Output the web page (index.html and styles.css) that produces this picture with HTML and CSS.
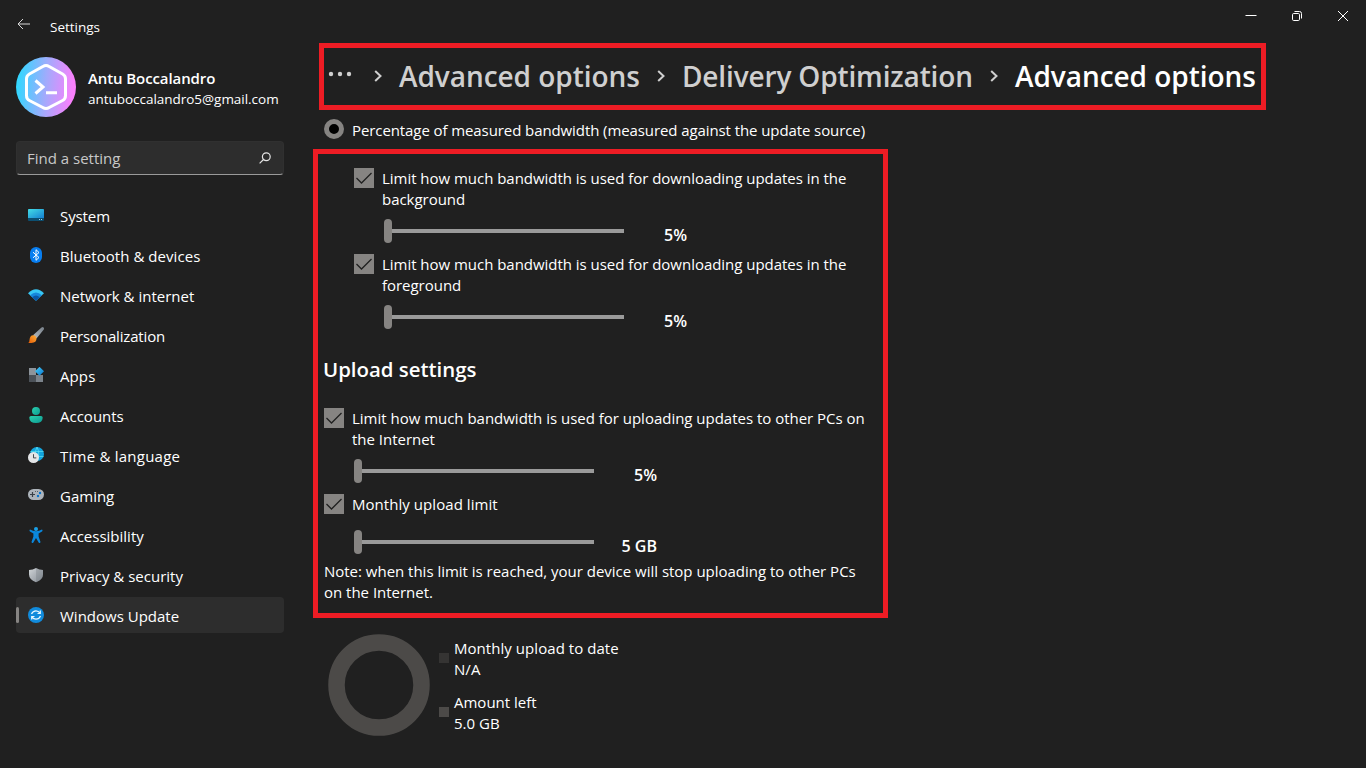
FILE: index.html
```html
<!DOCTYPE html>
<html lang="en">
<head>
<meta charset="utf-8">
<title>Settings</title>
<link rel="stylesheet" href="styles.css">
</head>
<body>
<div class="window">
  <aside class="sidebar">
    <header class="titlebar">
      <svg class="back" width="14" height="12" viewBox="0 0 14 12" fill="none" stroke="#d8d8d8"><path d="M13 6H1.2M6 1 1 6l5 5"/></svg>
      <span class="apptitle">Settings</span>
    </header>
    <div class="profile">
      <svg class="avatar" width="60" height="60" viewBox="0 0 60 60" fill="none">
        <defs><linearGradient id="av" x1="0" y1="0.45" x2="1" y2="0.55"><stop offset="0.02" stop-color="#32d7ff"/><stop offset="0.5" stop-color="#a3aafc"/><stop offset="0.95" stop-color="#fb80fc"/></linearGradient></defs>
        <circle cx="30" cy="30" r="30" fill="url(#av)"/>
        <path d="M26.8 9.6Q30 7.3 33.2 9.6L46.6 17Q49.5 18.6 49.5 22V38.500Q49.500 42 46.600 43.500L33.200 50.500Q30 52.600 26.800 50.500L13.400 43.500Q10.500 42 10.500 38.500V22Q10.500 18.600 13.400 17Z" stroke="#fff" stroke-width="3"/>
        <path d="m19.500 23.500 7.500 6.500-7.500 6.500M30 35.800h11" stroke="#fff" stroke-width="3"/>
      </svg>
      <div class="who"><div class="name">Antu Boccalandro</div><div class="mail">antuboccalandro5@gmail.com</div></div>
    </div>
    <div class="search"><span>Find a setting</span>
      <svg width="12" height="12" viewBox="0 0 12 12" fill="none" stroke="#e4e4e4" stroke-width="1.200"><circle cx="7.300" cy="4.700" r="3.900"/><path d="M4.500 7.500.6 11.400"/></svg>
    </div>
    <nav class="nav">
      <a class="item"><svg width="16" height="16" viewBox="0 0 16 16"><defs><linearGradient id="sy" x1="0" y1="0" x2="1" y2="1"><stop offset="0" stop-color="#43dde6"/><stop offset="1" stop-color="#1581d2"/></linearGradient></defs><rect y="2" width="16" height="12" rx="1" fill="#0c4f71"/><path d="M0 11V3q0-1 1-1h14q1 0 1 1v8z" fill="url(#sy)"/><path d="M11 12h1v1h-1zm2 0h1v1h-1z" fill="#9fd7ee"/></svg><span class="s1">System</span></a>
      <a class="item"><svg width="16" height="16" viewBox="0 0 16 16"><rect x="2" width="12" height="16" rx="6" fill="#087ef0"/><path d="m5 5.200 6 5.300-3 2.800V2.700l3 2.800-6 5.300" fill="none" stroke="#fff"/></svg><span class="s2">Bluetooth &amp; devices</span></a>
      <a class="item"><svg width="16" height="16" viewBox="0 0 16 16"><path d="M0 6.200Q8-1.500 16 6.200L8 13.800z" fill="#37c7f5"/><path d="M2.200 8.200Q8 2.800 13.800 8.200L8 13.800z" fill="#1687dc"/><path d="M4.300 10.200Q8 6.800 11.700 10.200L8 13.800z" fill="#0957a8"/></svg><span class="s3">Network &amp; internet</span></a>
      <a class="item"><svg width="16" height="16" viewBox="0 0 16 16"><defs><linearGradient id="br" x1="1" y1="0" x2="0" y2="1"><stop offset="0" stop-color="#747d86"/><stop offset="1" stop-color="#b9c0c6"/></linearGradient><linearGradient id="bo" x1="1" y1="0" x2="0" y2="1"><stop offset="0" stop-color="#ffb03a"/><stop offset="1" stop-color="#e65c05"/></linearGradient></defs><path d="M5 8.200 13.500.5q1.200-.8 2.100 0t.2 2L8.500 11.500z" fill="url(#br)"/><path d="M5 8.200q3 0 3.500 2.800.3 4.800-5.200 5H.3q1.300-1 1.200-3 .4-4.800 3.500-4.800z" fill="url(#bo)"/></svg><span class="s4">Personalization</span></a>
      <a class="item"><svg width="16" height="16" viewBox="0 0 16 16"><defs><linearGradient id="ap" x1="0" y1="0" x2="1" y2="1"><stop offset="0" stop-color="#47d0fa"/><stop offset="1" stop-color="#0876cf"/></linearGradient></defs><path d="M1 1h7v7H1z" fill="#8d949b"/><path d="M1 8h7v7H1z" fill="#4c5259"/><path d="M8 8h7v7H8z" fill="#7b838b"/><path d="m11.500-.2 4.500 4.500-4.500 4.500L7 4.300z" fill="url(#ap)"/></svg><span class="s5">Apps</span></a>
      <a class="item"><svg width="16" height="16" viewBox="0 0 16 16"><defs><linearGradient id="ac" x1="0" y1="0" x2="1" y2="1"><stop offset="0" stop-color="#2bd0ae"/><stop offset="1" stop-color="#0c9b92"/></linearGradient></defs><circle cx="8" cy="4" r="4" fill="url(#ac)"/><path d="M3 9h10q1.700 0 1.700 1.700Q14.500 16 8 16t-6.700-5.300Q1.300 9 3 9z" fill="url(#ac)"/></svg><span class="s6">Accounts</span></a>
      <a class="item"><svg width="16" height="16" viewBox="0 0 16 16"><circle cx="9" cy="7" r="7" fill="#12a5de"/><path d="M9 0Q5.500 7 9 14M9 0q3.500 7 0 14M2.500 4.500h13M3 9.500h12.500" fill="none" stroke="#57dcf0" stroke-width=".8"/><circle cx="5.500" cy="10.500" r="5.500" fill="#e3e5e7"/><path d="M5.500 7.200v3.700h2.800" fill="none" stroke="#454b50"/></svg><span class="s7">Time &amp; language</span></a>
      <a class="item"><svg width="16" height="16" viewBox="0 0 16 16"><rect y="2" width="16" height="11" rx="5.500" fill="#adb4bb"/><path d="M4.500 5v5M2 7.500h5" stroke="#394047" stroke-width="1.200"/><path d="M7 4h1v1H7zm2 0h1v1H9z" fill="#596168"/><circle cx="12" cy="6" r="1.200" fill="#0a74cc"/><circle cx="10" cy="9" r="1.200" fill="#0a74cc"/></svg><span class="s8">Gaming</span></a>
      <a class="item"><svg width="16" height="16" viewBox="0 0 16 16"><circle cx="8" cy="2" r="2" fill="#19a0e8"/><path d="M2 2.500Q8 6 14 2.500q1 .8 0 1.900L10.600 6.500v3L12.500 15q-.5 1.500-1.700.8L8 11 5.200 15.800q-1.200.7-1.700-.8l1.900-5.500v-3L2 4.400q-1-1.100 0-1.900z" fill="#0a87dc"/></svg><span class="s9">Accessibility</span></a>
      <a class="item"><svg width="16" height="16" viewBox="0 0 16 16"><defs><linearGradient id="sh" x1="0" y1="0" x2="1" y2="1"><stop offset="0" stop-color="#d0d4d7"/><stop offset="1" stop-color="#858c94"/></linearGradient></defs><path d="M8 1q3 2 7 2v4.500q0 5-7 7.800Q1 12.500 1 7.500V3q4 0 7-2z" fill="url(#sh)"/><path d="M8 1q3 2 7 2v4.500q0 5-7 7.800z" fill="#6c737b" opacity=".3"/></svg><span class="s10">Privacy &amp; security</span></a>
      <a class="item active"><svg width="16" height="16" viewBox="0 0 16 16"><circle cx="8" cy="8" r="8" fill="#118bdc"/><path d="M3.500 7Q4.800 3.800 8 3.800q2.500 0 4 2.300M12.500 9Q11.200 12.200 8 12.200q-2.500 0-4-2.300M12.300 3.500v3H9.500M3.700 12.500v-3h2.800" fill="none" stroke="#e8f8ff" stroke-width="1.200"/></svg><span class="s11">Windows Update</span></a>
    </nav>
  </aside>

  <main class="main">
    <div class="controls">
      <span class="ctl"><svg width="12" height="12" viewBox="0 0 12 12" fill="none" stroke="#fff"><path d="M.5 5.500h11"/></svg></span>
      <span class="ctl"><svg width="12" height="12" viewBox="0 0 12 12" fill="none" stroke="#fff"><rect x="1.500" y="3.500" width="7" height="7" rx="1.200"/><path d="M3.500 1.500h5q2 0 2 2v5"/></svg></span>
      <span class="ctl"><svg width="12" height="12" viewBox="0 0 12 12" fill="none" stroke="#fff"><path d="m1 1 10 10M11 1 1 11"/></svg></span>
    </div>

    <div class="crumbs">
      <svg class="dots" width="24" height="6" viewBox="0 0 24 6" fill="#cfcfcf"><circle cx="3" cy="3" r="2.200"/><circle cx="12" cy="3" r="2.200"/><circle cx="21" cy="3" r="2.200"/></svg>
      <svg class="chev c1" width="8" height="12" viewBox="0 0 8 12"><path d="m1.200 1 5.300 5-5.300 5"/></svg>
      <span class="crumb k1">Advanced options</span>
      <svg class="chev c2" width="8" height="12" viewBox="0 0 8 12"><path d="m1.200 1 5.300 5-5.300 5"/></svg>
      <span class="crumb k2">Delivery Optimization</span>
      <svg class="chev c3" width="8" height="12" viewBox="0 0 8 12"><path d="m1.200 1 5.300 5-5.300 5"/></svg>
      <span class="crumb k3 current">Advanced options</span>
    </div>

    <div class="option"><span class="radio"></span><span class="t1">Percentage of measured bandwidth (measured against the update source)</span></div>

    <section class="panel">
      <div class="indent">
        <div class="check"><span class="box"><svg width="20" height="20" viewBox="0 0 20 20"><path d="m2.500 10 5 5L17.500 5"/></svg></span><span class="t2">Limit how much bandwidth is used for downloading updates in the<br>background</span></div>
        <div class="slider"><span class="thumb"></span><span class="track"></span><span class="value">5%</span></div>
        <div class="check"><span class="box"><svg width="20" height="20" viewBox="0 0 20 20"><path d="m2.500 10 5 5L17.500 5"/></svg></span><span class="t2">Limit how much bandwidth is used for downloading updates in the<br>foreground</span></div>
        <div class="slider"><span class="thumb"></span><span class="track"></span><span class="value">5%</span></div>
      </div>
      <h2 class="heading">Upload settings</h2>
      <div class="check"><span class="box"><svg width="20" height="20" viewBox="0 0 20 20"><path d="m2.500 10 5 5L17.500 5"/></svg></span><span class="t3">Limit how much bandwidth is used for uploading updates to other PCs on<br>the Internet</span></div>
      <div class="slider"><span class="thumb"></span><span class="track"></span><span class="value">5%</span></div>
      <div class="check short"><span class="box"><svg width="20" height="20" viewBox="0 0 20 20"><path d="m2.500 10 5 5L17.500 5"/></svg></span><span class="t4">Monthly upload limit</span></div>
      <div class="slider"><span class="thumb"></span><span class="track"></span><span class="value">5 GB</span></div>
      <p class="note">Note: when this limit is reached, your device will stop uploading to other PCs<br>on the Internet.</p>
    </section>

    <div class="usage">
      <svg width="102" height="102" viewBox="0 0 102 102"><circle cx="51" cy="51" r="42.500" fill="none" stroke="#4c4a48" stroke-width="16.500"/></svg>
      <div class="legend">
        <div class="entry"><i class="sw dark"></i><span class="t5">Monthly upload to date<br>N/A</span></div>
        <div class="entry"><i class="sw"></i><span>Amount left<br>5.0 GB</span></div>
      </div>
    </div>
  </main>
</div>
</body>
</html>
```
FILE: styles.css
```css
* { box-sizing: border-box; }
body {
  margin: 0;
  background: #202020;
  color: #fff;
  font: 15px/21px "Open Sans", "Noto Sans", sans-serif;
  overflow: hidden;
}
svg { display: block; flex: none; }
span, p, h2, .name, .mail { white-space: nowrap; }
.window { display: grid; grid-template-columns: 313px 1fr; width: 1366px; height: 768px; }

.sidebar { padding: 0 29px 0 16px; }
.titlebar { display: flex; height: 57px; padding: 17px 0 0 1px; }
.back { margin-top: 1px; }
.apptitle { margin-left: 19px; font-size: 13.5px; line-height: 20px; }
.profile { display: flex; gap: 12px; height: 60px; }
.who { padding-top: 11px; }
.name { font-weight: 600; letter-spacing: -0.1px; }
.mail { font-size: 13.5px; letter-spacing: -0.03px; }
.search {
  display: flex; align-items: center; justify-content: space-between;
  height: 34px; margin-top: 24px; padding: 0 12px 0 10px;
  background: #2d2d2d; border: 1px solid #303030; border-bottom-color: #9a9a9a;
  border-radius: 4px; color: #c8c8c8;
}
.nav { display: flex; flex-direction: column; gap: 4px; margin-top: 22px; }
.item { display: flex; align-items: center; gap: 16px; height: 36px; padding-left: 12px; border-radius: 4px; }
.item span { padding-top: 2px; }
.s1 { letter-spacing: -0.1px; }
.s2 { letter-spacing: 0.05px; }
.s4 { letter-spacing: -0.17px; }
.s5 { letter-spacing: 0.1px; }
.s7 { letter-spacing: 0.24px; }
.active { background: #2d2d2d; padding-left: 0; }
.active::before { content: ""; width: 3px; height: 16px; margin-right: -7px; border-radius: 2px; background: #868482; }

.controls { display: flex; justify-content: flex-end; height: 43px; }
.ctl { display: flex; align-items: center; justify-content: center; width: 46px; height: 32px; }

.crumbs {
  display: flex; align-items: center; width: 947px; height: 67px; margin-left: 6px; padding-left: 4px;
  border: 5px solid #ed1c24; color: #cfcfcf; font-size: 28px; font-weight: 600; line-height: 36px;
}
.dots { margin-top: -5px; }
.chev { fill: none; stroke: #cfcfcf; stroke-width: 2; margin-top: -2px; }
.c1 { margin: -2px 17px 0 22px; }
.c2, .c3 { margin: -2px 17px 0; }
.crumb { flex: none; letter-spacing: -0.05px; padding-bottom: 2px; }
.k1, .k3 { width: 241px; }
.k2 { width: 291px; letter-spacing: -0.15px; }
.current { color: #fff; }

.option { display: flex; gap: 8px; height: 39px; padding: 9px 0 0 11px; }
.option .t1 { padding-top: 1px; letter-spacing: -0.09px; }
.t2 { letter-spacing: -0.03px; }
.t3, .note { letter-spacing: -0.015px; }
.t4, .t5 { letter-spacing: 0.05px; }
.radio { width: 20px; height: 20px; border: 5px solid #868482; border-radius: 50%; background: #000; }

.panel { width: 575px; height: 469px; padding: 14px 0 0 6px; border: 5px solid #ed1c24; }
.indent { padding-left: 30px; }
.check { display: flex; gap: 8px; height: 51px; }
.short { height: 36px; }
.box { width: 20px; height: 20px; background: #868482; }
.box path { fill: none; stroke: #202020; stroke-width: 1.3; }
.slider { display: flex; align-items: center; height: 24px; padding-left: 30px; margin-bottom: 11px; }
.thumb { width: 8px; height: 24px; border-radius: 4px; background: #868482; }
.track { width: 232px; height: 4px; background: #9a9a9a; }
.value { width: 63px; padding-top: 9px; text-align: right; font-size: 16px; font-weight: 600; }
.heading { height: 26px; margin: 28px 0 25px -1px; font-size: 20.4px; line-height: 24px; font-weight: 600; }
.note { margin: -4px 0 0; }

.usage { display: flex; gap: 9px; padding: 16px 0 0 15px; }
.legend { display: flex; flex-direction: column; gap: 12px; padding-top: 4px; }
.entry { display: flex; gap: 5px; }
.sw { width: 10px; height: 10px; margin-top: 15px; background: #4c4a48; }
.dark { background: #353433; }
```
